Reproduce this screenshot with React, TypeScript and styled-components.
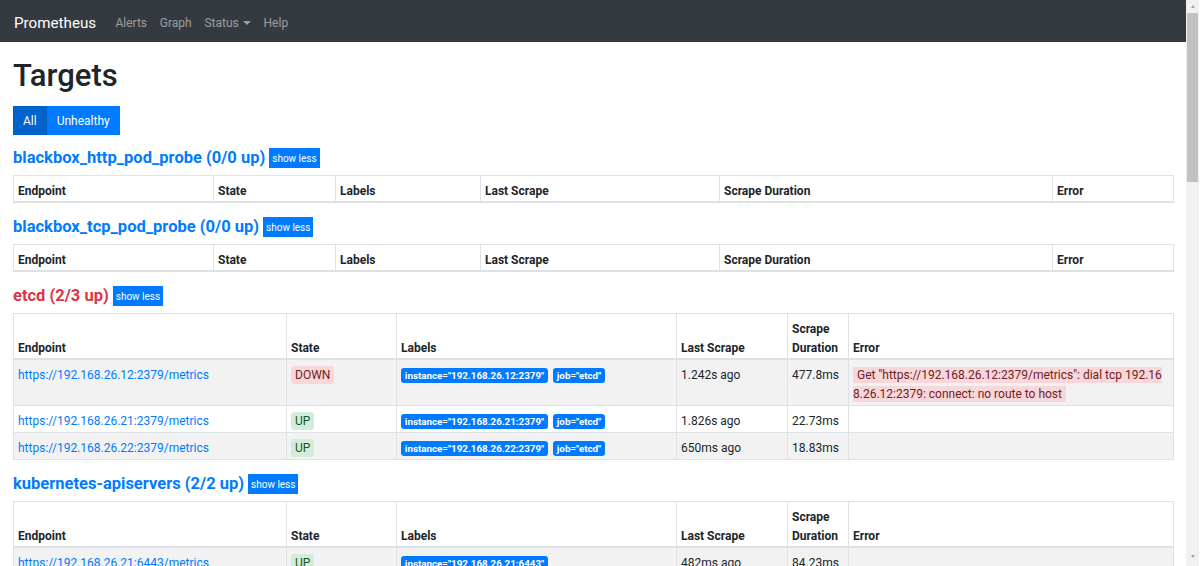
import styled, { createGlobalStyle } from "styled-components";

type Target = {
  endpoint: string;
  up: boolean;
  labels: [string, string][];
  lastScrape: string;
  duration: string;
  error?: string;
};

type Pool = {
  job: string;
  targets: Target[];
};

const EMPTY_COLS = [200, 122, 145, 239, 333, 121];
const FULL_COLS = [273, 110, 280, 111, 61, 325];

const pools: Pool[] = [
  { job: "blackbox_http_pod_probe", targets: [] },
  { job: "blackbox_tcp_pod_probe", targets: [] },
  {
    job: "etcd",
    targets: [
      {
        endpoint: "https://192.168.26.12:2379/metrics",
        up: false,
        labels: [["instance", "192.168.26.12:2379"], ["job", "etcd"]],
        lastScrape: "1.242s ago",
        duration: "477.8ms",
        error: 'Get "https://192.168.26.12:2379/metrics": dial tcp 192.168.26.12:2379: connect: no route to host',
      },
      {
        endpoint: "https://192.168.26.21:2379/metrics",
        up: true,
        labels: [["instance", "192.168.26.21:2379"], ["job", "etcd"]],
        lastScrape: "1.826s ago",
        duration: "22.73ms",
      },
      {
        endpoint: "https://192.168.26.22:2379/metrics",
        up: true,
        labels: [["instance", "192.168.26.22:2379"], ["job", "etcd"]],
        lastScrape: "650ms ago",
        duration: "18.83ms",
      },
    ],
  },
  {
    job: "kubernetes-apiservers",
    targets: [
      {
        endpoint: "https://192.168.26.21:6443/metrics",
        up: true,
        labels: [["instance", "192.168.26.21:6443"], ["job", "kubernetes-apiservers"]],
        lastScrape: "482ms ago",
        duration: "84.23ms",
      },
      {
        endpoint: "https://192.168.26.22:6443/metrics",
        up: true,
        labels: [["instance", "192.168.26.22:6443"], ["job", "kubernetes-apiservers"]],
        lastScrape: "1.107s ago",
        duration: "91.56ms",
      },
    ],
  },
];

function PoolSection({ pool }: { pool: Pool }) {
  const upCount = pool.targets.filter((t) => t.up).length;
  const healthy = upCount === pool.targets.length;
  const cols = pool.targets.length ? FULL_COLS : EMPTY_COLS;

  return (
    <section>
      <PoolHeader>
        <JobLink href={`#pool-${pool.job}`} $healthy={healthy}>
          {pool.job} ({upCount}/{pool.targets.length} up)
        </JobLink>
        <ToggleButton>show less</ToggleButton>
      </PoolHeader>
      <Table>
        <colgroup>
          {cols.map((w, i) => (
            <col key={i} width={w} />
          ))}
        </colgroup>
        <thead>
          <tr>
            <Th>Endpoint</Th>
            <Th>State</Th>
            <Th>Labels</Th>
            <Th>Last Scrape</Th>
            <Th>Scrape Duration</Th>
            <Th>Error</Th>
          </tr>
        </thead>
        <tbody>
          {pool.targets.map((t) => (
            <Row key={t.endpoint}>
              <Td>
                <EndpointLink href={t.endpoint}>{t.endpoint}</EndpointLink>
              </Td>
              <Td>
                <StateBadge $up={t.up}>{t.up ? "UP" : "DOWN"}</StateBadge>
              </Td>
              <Td>
                {t.labels.map(([k, v]) => (
                  <LabelBadge key={k}>
                    {k}="{v}"
                  </LabelBadge>
                ))}
              </Td>
              <Td>{t.lastScrape}</Td>
              <Td>{t.duration}</Td>
              <Td>{t.error && <ErrorText>{t.error}</ErrorText>}</Td>
            </Row>
          ))}
        </tbody>
      </Table>
    </section>
  );
}

export default function App() {
  return (
    <Shell>
      <GlobalStyle />
      <Page>
        <Navbar>
          <Brand href="#">Prometheus</Brand>
          <NavLink href="#">Alerts</NavLink>
          <NavLink href="#">Graph</NavLink>
          <NavLink href="#">
            Status
            <Caret />
          </NavLink>
          <NavLink href="#">Help</NavLink>
        </Navbar>
        <Main>
          <Title>Targets</Title>
          <FilterGroup>
            <FilterButton $active>All</FilterButton>
            <FilterButton>Unhealthy</FilterButton>
          </FilterGroup>
          {pools.map((p) => (
            <PoolSection key={p.job} pool={p} />
          ))}
        </Main>
      </Page>
      <ScrollBar>
        <ScrollArrow $dir="up" />
        <ScrollThumb />
        <ScrollSpacer />
        <ScrollArrow $dir="down" />
      </ScrollBar>
    </Shell>
  );
}

const GlobalStyle = createGlobalStyle`
  html, body {
    margin: 0;
    padding: 0;
    height: 100%;
    overflow: hidden;
  }
  body {
    font-family: Roboto, "Segoe UI", Arial, sans-serif;
    font-size: 12px;
    color: #212529;
    background: #fff;
  }
  * {
    box-sizing: border-box;
  }
`;

const Shell = styled.div`
  display: flex;
  height: 100vh;
  overflow: hidden;
`;

const Page = styled.div`
  flex: 1;
  min-width: 0;
  overflow: hidden;
`;

const ScrollBar = styled.div`
  display: flex;
  flex-direction: column;
  width: 16px;
  padding-right: 3px;
  background: linear-gradient(to right, #f1f1f1 13px, #fff 13px);
`;

const ScrollArrow = styled.div<{ $dir: "up" | "down" }>`
  display: flex;
  align-items: center;
  justify-content: center;
  height: 13px;
  margin-bottom: ${(p) => (p.$dir === "down" ? "3px" : "0")};

  &::after {
    content: "";
    border-left: 2.5px solid transparent;
    border-right: 2.5px solid transparent;
    ${(p) => (p.$dir === "up" ? "border-bottom" : "border-top")}: 3px solid #a3a3a3;
  }
`;

const ScrollThumb = styled.div`
  height: 169px;
  margin-left: 1px;
  width: 11px;
  background: #c1c1c1;
`;

const ScrollSpacer = styled.div`
  flex: 1;
`;

const Navbar = styled.nav`
  display: flex;
  align-items: center;
  height: 42px;
  padding: 3px 13px 0 14px;
  background: #343a40;
`;

const Brand = styled.a`
  margin-right: 12.8px;
  font-size: 15.2px;
  line-height: 20px;
  color: #fff;
  text-decoration: none;
`;

const NavLink = styled.a`
  display: flex;
  align-items: center;
  padding: 0 6.4px;
  font-size: 12px;
  line-height: 18px;
  color: rgba(255, 255, 255, 0.5);
  text-decoration: none;
`;

const Caret = styled.span`
  margin-left: 4px;
  border-top: 4px solid;
  border-left: 4px solid transparent;
  border-right: 4px solid transparent;
`;

const Main = styled.main`
  padding: 0 13px;
`;

const Title = styled.h1`
  margin: 15px 0 12px;
  font-size: 31px;
  font-weight: 500;
  line-height: 37px;
`;

const FilterGroup = styled.div`
  display: flex;
  margin-bottom: 13px;
`;

const FilterButton = styled.button<{ $active?: boolean }>`
  height: 29px;
  padding: 0 9px;
  border: 1px solid ${(p) => (p.$active ? "#005cbf" : "#007bff")};
  background: ${(p) => (p.$active ? "#0062cc" : "#007bff")};
  color: #fff;
  font-family: inherit;
  font-size: 12px;
  cursor: pointer;
`;

const PoolHeader = styled.div`
  display: flex;
  align-items: center;
  gap: 4px;
  height: 20px;
  margin-bottom: 7px;
`;

const JobLink = styled.a<{ $healthy: boolean }>`
  font-size: 16.5px;
  font-weight: 700;
  line-height: 20px;
  color: ${(p) => (p.$healthy ? "#007bff" : "#dc3545")};
  text-decoration: none;
`;

const ToggleButton = styled.button`
  height: 20px;
  padding: 0 3px;
  border: 0;
  background: #007bff;
  color: #fff;
  font-family: inherit;
  font-size: 10px;
  cursor: pointer;
`;

const Table = styled.table`
  width: 100%;
  margin-bottom: 14px;
  table-layout: fixed;
  border-collapse: collapse;
`;

const Th = styled.th`
  padding: 5.5px 4px 0.5px;
  border: 1px solid #dee2e6;
  border-bottom-width: 2px;
  text-align: left;
  vertical-align: bottom;
  font-weight: 700;
  line-height: 19px;
`;

const Row = styled.tr`
  &:nth-of-type(odd) {
    background: rgba(0, 0, 0, 0.05);
  }
`;

const Td = styled.td`
  padding: 5.5px 4px 1.5px;
  border: 1px solid #dee2e6;
  vertical-align: top;
  line-height: 19px;
`;

const EndpointLink = styled.a`
  color: #007bff;
  text-decoration: none;
`;

const StateBadge = styled.span<{ $up: boolean }>`
  display: inline-block;
  padding: 0 4px;
  border-radius: 3px;
  background: ${(p) => (p.$up ? "#d4edda" : "#f8d7da")};
  color: ${(p) => (p.$up ? "#155724" : "#721c24")};
  line-height: 18px;
`;

const LabelBadge = styled.span`
  display: inline-block;
  margin-right: 5px;
  padding: 2.4px 3.8px;
  border-radius: 3px;
  background: #007bff;
  color: #fff;
  font-size: 9.8px;
  font-weight: 700;
  line-height: 1;
`;

const ErrorText = styled.span`
  padding: 1px 4px;
  background: #f8d7da;
  color: #721c24;
  word-break: break-all;
`;
